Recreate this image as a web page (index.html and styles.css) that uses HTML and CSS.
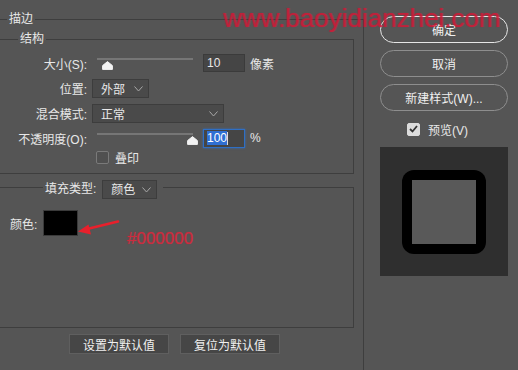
FILE: index.html
```html
<!DOCTYPE html>
<html lang="zh-CN">
<head>
  <meta charset="UTF-8">
  <title>描边</title>
  <link rel="stylesheet" href="styles.css">
</head>
<body>
<div class="page">

  <!-- левая часть: параметры обводки -->
  <div class="main">
    <fieldset class="stroke">
      <legend>描边</legend>

      <fieldset class="group structure">
        <legend>结构</legend>
        <div class="row first">
          <span class="lbl">大小(S):</span>
          <div class="slider">
            <span class="track"></span>
            <svg class="thumb" style="left:10px" width="11" height="9" viewBox="0 0 11 9"><path d="M5.5 0.6 L10.4 4.6 L10.4 8.4 L0.6 8.4 L0.6 4.6 Z" fill="#f2f2f2" stroke="#f2f2f2" stroke-linejoin="round"/></svg>
          </div>
          <div class="num">10</div>
          <span class="unit">像素</span>
        </div>
        <div class="row">
          <span class="lbl">位置:</span>
          <div class="select sel-pos">外部
            <svg class="chev" width="9" height="6" viewBox="0 0 9 6"><polyline points="0.5,0.5 4.5,5 8.5,0.5" fill="none" stroke="#a8a8a8"/></svg>
          </div>
        </div>
        <div class="row">
          <span class="lbl">混合模式:</span>
          <div class="select sel-mode">正常
            <svg class="chev" width="9" height="6" viewBox="0 0 9 6"><polyline points="0.5,0.5 4.5,5 8.5,0.5" fill="none" stroke="#a8a8a8"/></svg>
          </div>
        </div>
        <div class="row">
          <span class="lbl">不透明度(O):</span>
          <div class="slider">
            <span class="track"></span>
            <svg class="thumb" style="left:95px" width="11" height="9" viewBox="0 0 11 9"><path d="M5.5 0.6 L10.4 4.6 L10.4 8.4 L0.6 8.4 L0.6 4.6 Z" fill="#f2f2f2" stroke="#f2f2f2" stroke-linejoin="round"/></svg>
          </div>
          <div class="num focus"><span class="sel-text">100</span><span class="caret"></span></div>
          <span class="unit">%</span>
        </div>
        <div class="row check-row">
          <span class="lbl"></span>
          <span class="box"></span>
          <span>叠印</span>
        </div>
      </fieldset>

      <fieldset class="group fill">
        <legend>
          <span class="fill-lbl">填充类型:</span>
          <div class="select sel-fill">颜色
            <svg class="chev" width="9" height="6" viewBox="0 0 9 6"><polyline points="0.5,0.5 4.5,5 8.5,0.5" fill="none" stroke="#a8a8a8"/></svg>
          </div>
        </legend>
        <div class="fill-body">
          <div class="color-row">
            <span>颜色:</span>
            <div class="swatch"></div>
          </div>
          <!-- пометки поверх скриншота -->
          <svg class="arrow" width="46" height="22" viewBox="0 0 46 22">
            <path d="M42 5.5 L11 13" stroke="#e8202c" stroke-width="2.6" stroke-linecap="round"/>
            <path d="M2 15.5 L12.5 8.5 L15 18.5 Z" fill="#e8202c"/>
          </svg>
          <span class="note">#000000</span>
        </div>
      </fieldset>

      <div class="defaults">
        <button class="btn-def">设置为默认值</button>
        <button class="btn-def">复位为默认值</button>
      </div>
    </fieldset>
  </div>

  <!-- правая часть: кнопки и превью -->
  <div class="side">
    <button class="pill ok">确定</button>
    <button class="pill">取消</button>
    <button class="pill">新建样式(W)...</button>
    <div class="preview-check">
      <span class="box checked">
        <svg width="9" height="8" viewBox="0 0 9 8"><polyline points="1,4 3.5,6.5 8,1" fill="none" stroke="#333" stroke-width="1.8"/></svg>
      </span>
      <span>预览(V)</span>
    </div>
    <div class="preview">
      <div class="shape"><div class="shape-in"></div></div>
    </div>
  </div>

  <div class="watermark">www.baoyidianzhei.com</div>
</div>
</body>
</html>
```

FILE: styles.css
```css
* {
  box-sizing: border-box;
}
body {
  margin: 0;
  background-color: #555;
  font-family: "Liberation Sans", "Noto Sans CJK SC", sans-serif;
  font-size: 12px;
  color: #e8e8e8;
}
.page {
  position: relative;
  display: flex;
  width: 518px;
  height: 370px;
  overflow: hidden;
}
/* Рамки групп */
fieldset {
  margin: 0;
  border: 1px solid #3e3e3e;
  min-width: 0;
}
legend {
  padding: 0 2px;
  line-height: 16px;
}
.main {
  width: 374px;
  margin-left: -10px;
  flex-shrink: 0;
}
.stroke {
  margin-top: 11px;
  padding: 0 9px 0 4px;
  height: 400px;
}
.stroke > legend {
  margin-left: 12px;
}
.group {
  padding: 0;
}
.structure {
  margin-top: 4px;
  padding: 6px 0 9px 0;
}
.structure > legend {
  margin-left: 22px;
}
/* Строки параметров */
.row {
  display: flex;
  align-items: center;
  height: 20px;
  margin-top: 5px;
}
.row.first {
  margin-top: 0;
}
.lbl {
  width: 91px;
  text-align: right;
  margin-right: 5px;
  flex-shrink: 0;
}
.slider {
  position: relative;
  width: 106px;
  height: 20px;
  margin-right: 5px;
}
.track {
  position: absolute;
  left: 5px;
  right: 5px;
  top: 5px;
  height: 2px;
  background-color: #767676;
}
.thumb {
  position: absolute;
  top: 8px;
}
.num {
  display: flex;
  align-items: center;
  width: 42px;
  height: 18px;
  padding-left: 3px;
  background-color: #454545;
  border: 1px solid #3b3b3b;
  margin-right: 5px;
}
.num.focus {
  height: 19px;
  border: 1px solid #2f6fc4;
  box-shadow: 0 0 2px #2f6fc4;
}
.sel-text {
  background-color: #2f6fd3;
  color: #fff;
  line-height: 14px;
}
.caret {
  width: 1px;
  height: 13px;
  background-color: #ddd;
}
.select {
  position: relative;
  display: flex;
  align-items: center;
  height: 19px;
  padding-left: 8px;
  background-color: #4a4a4a;
  border: 1px solid #3d3d3d;
}
.sel-pos {
  width: 57px;
}
.sel-mode {
  width: 132px;
}
.chev {
  position: absolute;
  right: 5px;
  top: 6px;
}
.check-row {
  height: 14px;
  margin-top: 2px;
}
.box {
  display: inline-flex;
  align-items: center;
  justify-content: center;
  width: 13px;
  height: 13px;
  border: 1px solid #7a7a7a;
  border-radius: 2px;
  background-color: #505050;
  margin-left: 4px;
  margin-right: 6px;
}
/* Заливка */
.fill {
  margin-top: 6px;
}
.fill > legend {
  display: flex;
  align-items: flex-start;
  height: 14px;
  margin-left: 47px;
  padding: 0 6px 0 2px;
}
.fill-lbl {
  line-height: 19px;
  margin-right: 6px;
}
.sel-fill {
  width: 55px;
}
.fill-body {
  position: relative;
  height: 133px;
  padding-top: 16px;
}
.color-row {
  display: flex;
  align-items: center;
  margin-left: 14px;
}
.swatch {
  width: 35px;
  height: 26px;
  margin-left: 6px;
  background-color: #000;
  border: 1px solid #3a3a3a;
}
.arrow {
  position: absolute;
  left: 80px;
  top: 22px;
}
.note {
  position: absolute;
  left: 131px;
  top: 36px;
  font-size: 17px;
  line-height: 17px;
  color: #e0263c;
  opacity: 0.85;
  text-shadow: 0 0 1px rgba(224, 38, 60, 0.7);
}
.defaults {
  display: flex;
  justify-content: center;
  gap: 11px;
  margin-top: 6px;
}
.btn-def {
  width: 100px;
  height: 20px;
  padding: 0;
  font-family: inherit;
  font-size: 12px;
  color: #f0f0f0;
  background-color: #464646;
  border: 1px solid #5f5f5f;
}
/* Правая колонка */
.side {
  display: flex;
  flex-direction: column;
  width: 154px;
  padding: 16px 0 0 16px;
}
.pill {
  width: 128px;
  height: 27px;
  margin-bottom: 7px;
  font-family: inherit;
  font-size: 12px;
  color: #f0f0f0;
  background: transparent;
  border: 1px solid #8e8e8e;
  border-radius: 14px;
}
.pill.ok {
  border: 1.5px solid #e6e6e6;
}
.preview-check {
  display: flex;
  align-items: center;
  height: 16px;
  margin-top: 3px;
  padding-left: 23px;
}
.box.checked {
  background-color: #dcdcdc;
  border-color: #dcdcdc;
  margin-right: 8px;
}
.preview {
  display: flex;
  align-items: center;
  justify-content: center;
  width: 128px;
  height: 129px;
  margin-top: 10px;
  background-color: #2f2f2f;
}
.shape {
  display: flex;
  align-items: center;
  justify-content: center;
  width: 84px;
  height: 84px;
  background-color: #000;
  border-radius: 12px;
}
.shape-in {
  width: 64px;
  height: 64px;
  background-color: #595959;
}
/* Водяной знак */
.watermark {
  position: absolute;
  left: 223px;
  top: 5px;
  font-size: 26px;
  line-height: 26px;
  color: rgba(210, 25, 55, 0.6);
  text-shadow: 0 0 1px rgba(210, 25, 55, 0.6), 1px 0 0 rgba(210, 25, 55, 0.3);
  white-space: nowrap;
}
```
